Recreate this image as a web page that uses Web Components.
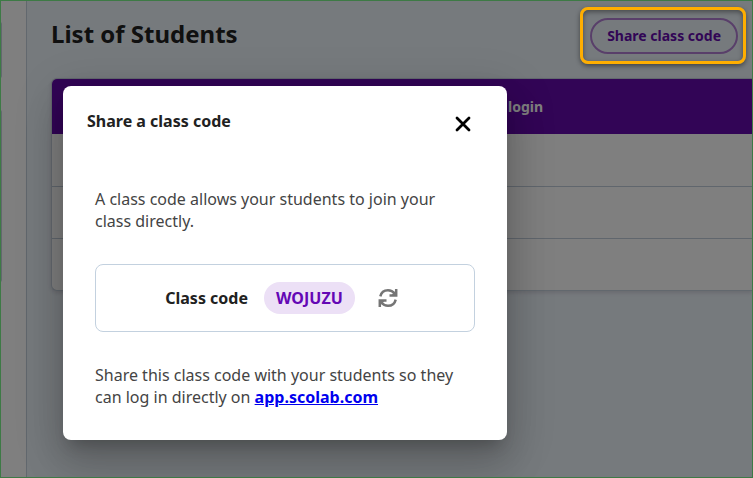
<!DOCTYPE html>
<html lang="en">
<head>
<meta charset="utf-8">
<title>List of Students</title>
<style>
html, body { height: 100%; margin: 0; }
body { font-family: "Noto Sans", sans-serif; font-size: 16px; color: #212121; overflow: hidden; }
</style>
</head>
<body>
<student-app></student-app>
<script>
const define = (name, html) => {
  const template = document.createElement('template');
  template.innerHTML = '<style>*{box-sizing:border-box}</style>' + html;
  customElements.define(name, class extends HTMLElement {
    constructor() {
      super();
      this.attachShadow({ mode: 'open' }).append(template.content.cloneNode(true));
    }
  });
};

define('side-rail', `
<style>
:host { display: flex; flex-direction: column; justify-content: flex-start; gap: 32px; width: 27px; flex: none; padding-top: 22px; background: #fff; border-right: 1px solid #c5d0dc; }
i { width: 2px; height: 56px; background: #c5d0dc; border-radius: 0 2px 2px 0; }
i + i { height: 172px; }
</style>
<i></i><i></i>`);

define('share-button', `
<style>
:host { display: block; }
button { display: block; height: 36px; padding: 0 15px; border: 2px solid #b27fd4; border-radius: 18px; background: transparent; color: #640aac; font: 700 14px/20px "Noto Sans", sans-serif; }
</style>
<button type="button"><slot></slot></button>`);

define('student-table', `
<style>
:host { display: block; border: 1px solid #c5d0dc; border-right: 0; border-radius: 6px 0 0 6px; background: #fff; overflow: hidden; box-shadow: 0 2px 4px rgba(60,30,60,.15); }
table { width: 100%; border-collapse: collapse; table-layout: fixed; }
th { height: 55px; padding: 0; background: #640aac; color: #fff; font-size: 14px; font-weight: 700; text-align: left; }
th:first-child { width: 456px; }
td { height: 52px; padding: 0; border-bottom: 1px solid #c0ccda; }
tr:last-child td { border: 0; }
</style>
<table>
<thead><tr><th></th><th scope="col">login</th></tr></thead>
<tbody><tr><td></td><td></td></tr><tr><td></td><td></td></tr><tr><td></td><td></td></tr></tbody>
</table>`);

define('class-code', `
<style>
:host { display: flex; align-items: center; justify-content: center; height: 68px; border: 1px solid #c3d1df; border-radius: 8px; font-weight: 700; }
output { margin-left: 16px; height: 32px; padding: 0 12px; border-radius: 16px; background: #ece0f6; color: #6407b5; line-height: 32px; }
button { display: grid; place-items: center; width: 34px; height: 34px; margin-left: 16px; padding: 0; border: 0; background: none; color: #757575; }
svg { display: block; width: 20px; height: 20px; }
</style>
<label for="code">Class code</label>
<output id="code"><slot></slot></output>
<button type="button" aria-label="Generate a new code">
<svg viewBox="0 0 20 20" fill="none" stroke="currentColor" stroke-width="2.5">
<path d="M2.3 8.4C3.2 4.5 6.4 2.2 10 2.2c2.8 0 5 1.2 6.8 3.6"/>
<path d="M18.2 1v6.5h-6.7"/>
<path d="M13.3 7.2h5.2V2z" fill="currentColor" stroke="none"/>
<path d="M17.7 11.6c-.9 3.9-4.1 6.2-7.7 6.2-2.8 0-5-1.2-6.8-3.6"/>
<path d="M1.8 19v-6.5h6.7"/>
<path d="M6.7 12.8H1.5V18z" fill="currentColor" stroke="none"/>
</svg></button>`);

define('share-dialog', `
<style>
:host { display: block; width: 100%; max-width: 444px; height: max-content; border-radius: 8px; background: #fff; box-shadow: 0 11px 15px -7px rgba(0,0,0,.2), 0 24px 38px 3px rgba(0,0,0,.14), 0 9px 46px 8px rgba(0,0,0,.12); }
header { display: flex; justify-content: space-between; padding: 24px 32px 0 24px; }
h2 { margin: 0; font-size: 16px; line-height: 22px; font-weight: 700; }
button { display: grid; place-items: center; width: 24px; height: 28px; padding: 0; border: 0; background: none; color: #000; }
svg { display: block; width: 16px; height: 16px; }
section { padding: 50px 32px 32px; color: #444; line-height: 22px; }
p { margin: 0; }
class-code { margin: 32px 0; color: #212121; }
a { color: #0000ee; font-weight: 700; }
</style>
<header>
<h2>Share a class code</h2>
<button type="button" aria-label="Close"><svg viewBox="0 0 16 16" stroke="currentColor" stroke-width="2.8" stroke-linecap="round"><path d="M2 2l12 12M14 2L2 14"/></svg></button>
</header>
<section>
<p>A class code allows your students to join your class directly.</p>
<class-code>WOJUZU</class-code>
<p>Share this class code with your students so they can log in directly on <a href="https://app.scolab.com">app.scolab.com</a></p>
</section>`);

define('student-app', `
<style>
:host { display: flex; position: relative; height: 100%; background: #edf5fb; }
main { flex: 1; min-width: 0; padding: 18px 0 0 24px; }
.top { display: flex; justify-content: space-between; align-items: flex-start; height: 36px; margin-bottom: 24px; padding-right: 15px; }
h1 { margin: 0; font-size: 24px; line-height: 32px; font-weight: 700; }
.scrim { position: absolute; inset: 0; padding: 86px 24px 24px 63px; background: rgba(0,0,0,.5); overflow: hidden; }
.focus { position: absolute; top: 7px; right: 7px; width: 166px; height: 57px; border: 3px solid #ffae00; border-radius: 8px; box-shadow: 0 2px 5px rgba(0,0,0,.45), inset 0 2px 5px rgba(0,0,0,.4); }
.frame { position: absolute; inset: 0; border: 1px solid #3d7a45; pointer-events: none; }
</style>
<side-rail></side-rail>
<main>
<div class="top"><h1>List of Students</h1><share-button>Share class code</share-button></div>
<student-table></student-table>
</main>
<div class="scrim"><share-dialog role="dialog" aria-label="Share a class code"></share-dialog></div>
<div class="focus"></div>
<div class="frame"></div>`);
</script>
</body>
</html>
